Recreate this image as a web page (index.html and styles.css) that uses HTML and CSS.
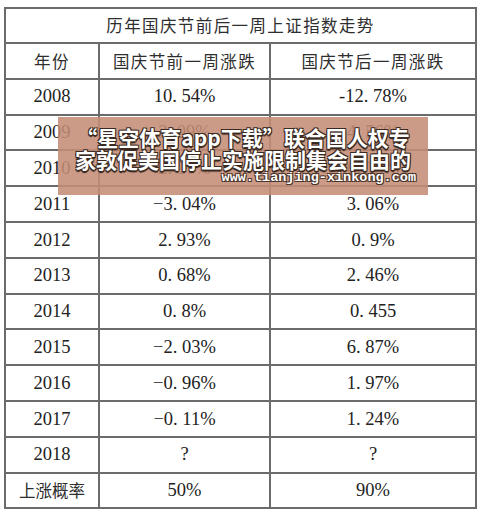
FILE: index.html
```html
<!DOCTYPE html>
<html lang="zh-CN">
<head>
    <meta charset="UTF-8">
    <meta name="viewport" content="width=device-width, initial-scale=1.0">
    <title>历年国庆节前后一周上证指数走势</title>
    <link rel="stylesheet" href="styles.css">
</head>
<body>

    <div class="page">
        <table class="trend">
            <colgroup>
                <col class="col-year">
                <col class="col-before">
                <col class="col-after">
            </colgroup>
            <tr class="title-row">
                <td colspan="3">历年国庆节前后一周上证指数走势</td>
            </tr>
            <tr class="head-row">
                <td>年份</td>
                <td>国庆节前一周涨跌</td>
                <td>国庆节后一周涨跌</td>
            </tr>
            <tr><td>2008</td><td>10. 54%</td><td>-12. 78%</td></tr>
            <tr><td>2009</td><td>3. 09%</td><td>4. 56%</td></tr>
            <tr><td>2010</td><td>2. 17%</td><td>6. 15%</td></tr>
            <tr><td>2011</td><td>−3. 04%</td><td>3. 06%</td></tr>
            <tr><td>2012</td><td>2. 93%</td><td>0. 9%</td></tr>
            <tr><td>2013</td><td>0. 68%</td><td>2. 46%</td></tr>
            <tr><td>2014</td><td>0. 8%</td><td>0. 455</td></tr>
            <tr><td>2015</td><td>−2. 03%</td><td>6. 87%</td></tr>
            <tr><td>2016</td><td>−0. 96%</td><td>1. 97%</td></tr>
            <tr><td>2017</td><td>−0. 11%</td><td>1. 24%</td></tr>
            <tr><td>2018</td><td>?</td><td>?</td></tr>
            <tr><td class="cn">上涨概率</td><td>50%</td><td>90%</td></tr>
        </table>

        <!-- 水印横幅 -->
        <div class="banner">
            <div class="banner-line">“星空体育app下载”联合国人权专</div>
            <div class="banner-line">家敦促美国停止实施限制集会自由的</div>
            <div class="banner-url">www.tianjing-xinkong.com</div>
        </div>
    </div>

</body>
</html>
```

FILE: styles.css
```css
body {
    margin: 0;
    padding: 0;
    background-color: #fff;
    font-family: "Liberation Serif", "Noto Sans CJK SC", serif;
    color: #222;
}

.page {
    position: relative;
    width: 486px;
    height: 515px;
    padding: 7px 0 0 4px;
    box-sizing: border-box;
}

.trend {
    border-collapse: collapse;
    width: 473px;
    table-layout: fixed;
}

.col-year {
    width: 94px;
}

.col-before {
    width: 171px;
}

.trend td {
    border: 2px solid #6b6b6b;
    height: 33.8px;
    padding: 0;
    text-align: center;
    font-size: 18.5px;
    line-height: 1;
}

.title-row td,
.head-row td,
.trend td.cn {
    font-family: "Noto Sans CJK SC", sans-serif;
    font-size: 16.5px;
    letter-spacing: 1.4px;
    color: #2e2e2e;
}

.trend td.cn {
    letter-spacing: 0;
}

.title-row td {
    height: 33px;
}

.banner {
    position: absolute;
    left: 58px;
    top: 117px;
    width: 370px;
    height: 78px;
    background-color: rgba(196, 141, 118, 0.88);
    font-family: "Noto Sans CJK SC", sans-serif;
    font-weight: 700;
    color: #fff;
    text-align: center;
    padding-top: 9px;
    box-sizing: border-box;
}

.banner-line {
    font-size: 21px;
    line-height: 22px;
    text-shadow: -1px -1px 0 #3a2a22, 1px -1px 0 #3a2a22, -1px 1px 0 #3a2a22, 1px 1px 0 #3a2a22, 0 2px 1px #2a1c16;
}

.banner-url {
    text-align: right;
    padding-right: 12px;
    margin-top: 1px;
    font-family: "Liberation Mono", monospace;
    font-size: 13.5px;
    line-height: 14px;
    font-weight: 700;
    text-shadow: -1px -1px 0 #4a3328, 1px -1px 0 #4a3328, -1px 1px 0 #4a3328, 1px 1px 0 #4a3328;
}
```
